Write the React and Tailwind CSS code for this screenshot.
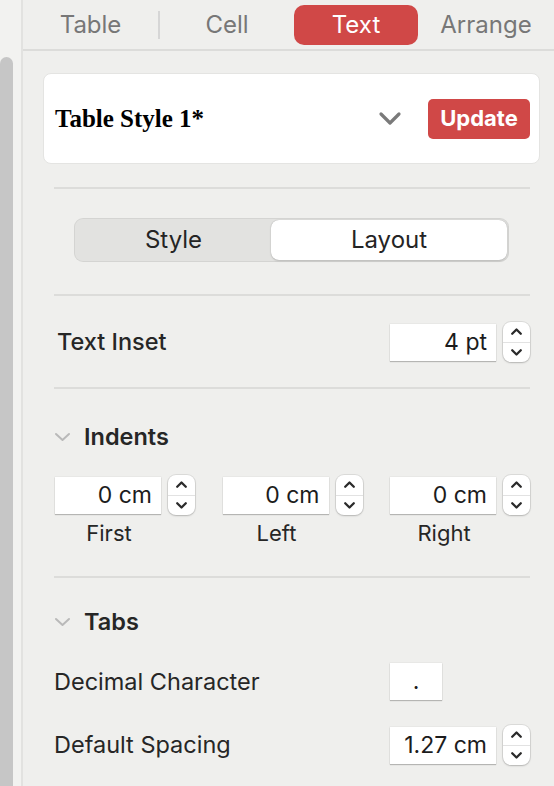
import React from "react";

const font = { fontFamily: '"Inter", "Liberation Sans", sans-serif' };

function Stepper() {
  return (
    <div className="flex h-[40px] w-[27px] flex-col items-center rounded-[8px] bg-white shadow-[0_0_0_1px_rgba(0,0,0,0.08),0_1px_2px_rgba(0,0,0,0.18)]">
      <div className="flex flex-1 items-center justify-center">
        <svg width="13" height="9" viewBox="0 0 13 9" fill="none">
          <path d="M2.2 6.8 L6.5 2.5 L10.8 6.8" stroke="#2a2a2a" strokeWidth="2.3" strokeLinecap="round" strokeLinejoin="round" />
        </svg>
      </div>
      <div className="h-px w-full bg-[#e2e2e2]" />
      <div className="flex flex-1 items-center justify-center">
        <svg width="13" height="9" viewBox="0 0 13 9" fill="none">
          <path d="M2.2 2.2 L6.5 6.5 L10.8 2.2" stroke="#2a2a2a" strokeWidth="2.3" strokeLinecap="round" strokeLinejoin="round" />
        </svg>
      </div>
    </div>
  );
}

function Field({ value, w = "w-[106px]", center = false }) {
  return (
    <div className={`flex h-[37px] ${w} items-center ${center ? "justify-center" : "justify-end pr-[9px]"} bg-white text-[23px] text-[#1c1c1c] shadow-[0_1px_1px_rgba(0,0,0,0.22),0_0_0_0.5px_rgba(0,0,0,0.06)]`}>
      {value}
    </div>
  );
}

function Divider() {
  return <div className="h-[2px] w-full bg-[#dcdcda]" />;
}

function Chevron() {
  return (
    <svg width="17" height="10" viewBox="0 0 17 10" fill="none">
      <path d="M2 2 L8.5 8 L15 2" stroke="#b9b9b9" strokeWidth="2" strokeLinecap="round" strokeLinejoin="round" />
    </svg>
  );
}

export default function App() {
  return (
    <div className="flex h-[786px] w-[554px] overflow-hidden bg-[#efefed]" style={font}>
      {/* left strip */}
      <div className="flex w-[23px] shrink-0 flex-col border-r-2 border-[#e2e2e0] bg-[#f2f2f0]">
        <div className="mt-[57px] w-[13px] flex-1 rounded-t-[7px] bg-[#c6c6c6]" />
      </div>

      <div className="flex flex-1 flex-col">
        {/* tab bar */}
        <div className="flex h-[51px] shrink-0 items-center border-b-2 border-[#dcdcda] bg-[#efefed] text-[24px] text-[#777777]">
          <div className="flex w-[135px] justify-center">Table</div>
          <div className="h-[28px] w-[2px] bg-[#d6d6d6]" />
          <div className="flex w-[134px] justify-center">Cell</div>
          <div className="flex h-[40px] w-[124px] items-center justify-center rounded-[10px] bg-[#d04847] text-white">Text</div>
          <div className="flex flex-1 justify-center">Arrange</div>
        </div>

        {/* style card */}
        <div className="ml-[20px] mt-[22px] flex h-[91px] w-[497px] items-center rounded-[8px] border border-[#e4e4e2] bg-white pl-[11px] pr-[9px]">
          <div className="flex-1 text-[25px] font-bold text-black" style={{ fontFamily: '"Liberation Serif", serif' }}>
            Table Style 1*
          </div>
          <svg width="24" height="15" viewBox="0 0 24 15" fill="none" className="mr-[26px]">
            <path d="M3 3 L12 12 L21 3" stroke="#7a7a7a" strokeWidth="3.2" strokeLinecap="round" strokeLinejoin="round" />
          </svg>
          <div className="flex h-[40px] w-[102px] items-center justify-center rounded-[5px] bg-[#d04847] text-[22px] font-bold text-white">
            Update
          </div>
        </div>

        <div className="ml-[31px] flex w-[476px] flex-col">
          <div className="mt-[23px]">
            <Divider />
          </div>

          {/* segmented */}
          <div className="ml-[20px] mr-[21px] mt-[29px] flex h-[44px] rounded-[9px] bg-[#e2e2e0] p-[2px] shadow-[inset_0_0_0_1px_rgba(0,0,0,0.06)]">
            <div className="flex w-[195px] items-center justify-center text-[24px] text-[#242424]">Style</div>
            <div className="flex flex-1 items-center justify-center rounded-[8px] bg-white text-[24px] text-[#242424] shadow-[0_0_1px_rgba(0,0,0,0.3),0_1px_2px_rgba(0,0,0,0.15)]">
              Layout
            </div>
          </div>

          <div className="mt-[32px]">
            <Divider />
          </div>

          {/* text inset */}
          <div className="mt-[26px] flex h-[40px] items-center">
            <div className="flex-1 pl-[3px] text-[23.5px] font-medium text-[#262626]">Text Inset</div>
            <Field value="4 pt" />
            <div className="ml-[7px]">
              <Stepper />
            </div>
          </div>

          <div className="mt-[25px]">
            <Divider />
          </div>

          {/* indents */}
          <div className="mt-[33px] flex h-[30px] items-center">
            <div className="w-[30px]">
              <Chevron />
            </div>
            <div className="text-[23.5px] font-semibold text-[#262626]">Indents</div>
          </div>
          <div className="mt-[23px] flex justify-between pl-[1px]">
            {[
              ["0 cm", "First"],
              ["0 cm", "Left"],
              ["0 cm", "Right"],
            ].map(([v, l]) => (
              <div key={l} className="flex flex-col">
                <div className="flex h-[40px] items-center">
                  <Field value={v} />
                  <div className="ml-[7px]">
                    <Stepper />
                  </div>
                </div>
                <div className="mt-[3px] w-[108px] text-center text-[22px] leading-[30px] text-[#262626]">{l}</div>
              </div>
            ))}
          </div>

          <div className="mt-[28px]">
            <Divider />
          </div>

          {/* tabs */}
          <div className="mt-[29px] flex h-[30px] items-center">
            <div className="w-[30px]">
              <Chevron />
            </div>
            <div className="text-[23.5px] font-semibold text-[#262626]">Tabs</div>
          </div>

          <div className="mt-[26px] flex h-[37px] items-center">
            <div className="flex-1 text-[23.5px] text-[#262626]">Decimal Character</div>
            <Field value="." w="w-[52px]" center />
            <div className="w-[88px]" />
          </div>

          <div className="mt-[25px] flex h-[40px] items-center">
            <div className="flex-1 text-[23.5px] text-[#262626]">Default Spacing</div>
            <Field value="1.27 cm" />
            <div className="ml-[7px]">
              <Stepper />
            </div>
          </div>
        </div>
      </div>
    </div>
  );
}
